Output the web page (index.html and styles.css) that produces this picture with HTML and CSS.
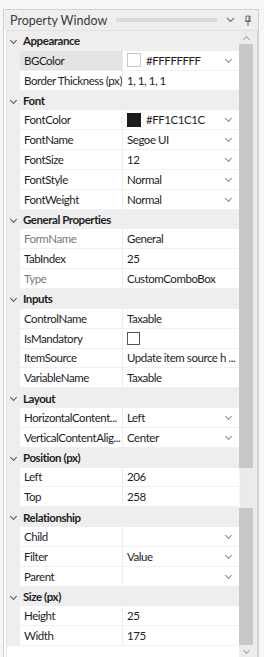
FILE: index.html
```html
<!DOCTYPE html>
<html lang="en">
<head>
  <meta charset="UTF-8">
  <title>Property Window</title>
  <link rel="stylesheet" href="styles.css">
</head>
<body>

  <div class="window">
    <div class="titlebar">
      <span class="title">Property Window</span>
      <span class="grip"></span>
      <svg class="tb-icon" width="9" height="6" viewBox="0 0 9 6"><path d="M1 1l3.5 3.5L8 1" fill="none" stroke="#777" stroke-width="1.2"/></svg>
      <svg class="tb-icon pin" width="8" height="11" viewBox="0 0 8 11"><path d="M2 1h4v5H2zM1 6.5h6M4 7v4M5 1v5" fill="none" stroke="#666" stroke-width="1"/></svg>
    </div>

    <div class="body">
      <div class="grid">

        <div class="cat"><span class="caret"></span>Appearance</div>
        <div class="row">
          <div class="name selected">BGColor</div>
          <div class="value"><span class="swatch white"></span>#FFFFFFFF<span class="drop"></span></div>
        </div>
        <div class="row">
          <div class="name">Border Thickness (px)</div>
          <div class="value">1, 1, 1, 1</div>
        </div>

        <div class="cat"><span class="caret"></span>Font</div>
        <div class="row">
          <div class="name">FontColor</div>
          <div class="value"><span class="swatch dark"></span>#FF1C1C1C<span class="drop"></span></div>
        </div>
        <div class="row">
          <div class="name">FontName</div>
          <div class="value">Segoe UI<span class="drop"></span></div>
        </div>
        <div class="row">
          <div class="name">FontSize</div>
          <div class="value">12<span class="drop"></span></div>
        </div>
        <div class="row">
          <div class="name">FontStyle</div>
          <div class="value">Normal<span class="drop"></span></div>
        </div>
        <div class="row">
          <div class="name">FontWeight</div>
          <div class="value">Normal<span class="drop"></span></div>
        </div>

        <div class="cat"><span class="caret"></span>General Properties</div>
        <div class="row">
          <div class="name readonly">FormName</div>
          <div class="value">General</div>
        </div>
        <div class="row">
          <div class="name">TabIndex</div>
          <div class="value">25</div>
        </div>
        <div class="row">
          <div class="name readonly">Type</div>
          <div class="value">CustomComboBox</div>
        </div>

        <div class="cat"><span class="caret"></span>Inputs</div>
        <div class="row">
          <div class="name">ControlName</div>
          <div class="value">Taxable</div>
        </div>
        <div class="row">
          <div class="name">IsMandatory</div>
          <div class="value"><span class="check"></span></div>
        </div>
        <div class="row">
          <div class="name">ItemSource</div>
          <div class="value">Update item source h ...</div>
        </div>
        <div class="row">
          <div class="name">VariableName</div>
          <div class="value">Taxable</div>
        </div>

        <div class="cat"><span class="caret"></span>Layout</div>
        <div class="row">
          <div class="name">HorizontalContent...</div>
          <div class="value">Left<span class="drop"></span></div>
        </div>
        <div class="row">
          <div class="name">VerticalContentAlig...</div>
          <div class="value">Center<span class="drop"></span></div>
        </div>

        <div class="cat"><span class="caret"></span>Position (px)</div>
        <div class="row">
          <div class="name">Left</div>
          <div class="value">206</div>
        </div>
        <div class="row">
          <div class="name">Top</div>
          <div class="value">258</div>
        </div>

        <div class="cat"><span class="caret"></span>Relationship</div>
        <div class="row">
          <div class="name">Child</div>
          <div class="value"><span class="drop"></span></div>
        </div>
        <div class="row">
          <div class="name">Filter</div>
          <div class="value">Value<span class="drop"></span></div>
        </div>
        <div class="row">
          <div class="name">Parent</div>
          <div class="value"><span class="drop"></span></div>
        </div>

        <div class="cat"><span class="caret"></span>Size (px)</div>
        <div class="row">
          <div class="name">Height</div>
          <div class="value">25</div>
        </div>
        <div class="row">
          <div class="name">Width</div>
          <div class="value">175</div>
        </div>

      </div>

      <div class="scrollbar">
        <div class="arrow up"></div>
        <div class="thumb"></div>
        <div class="thumb-gap"></div>
        <div class="thumb rest"></div>
        <div class="arrow down"></div>
      </div>
    </div>
  </div>

</body>
</html>
```

FILE: styles.css
```css
body {
  margin: 0;
  padding: 9px 5px 0 3px;
  background: #f6f6f6;
  font-family: "Lato", "Noto Sans", sans-serif;
  font-size: 11.5px;
  letter-spacing: -0.45px;
  color: #1e1e1e;
}
.window {
  border: 1px solid #d2d2d2;
  border-bottom: none;
  background: #fff;
  height: 648px;
  display: flex;
  flex-direction: column;
}
.titlebar {
  height: 20px;
  background: #eeeeee;
  display: flex;
  align-items: center;
  padding: 0 6px 0 6px;
  gap: 5px;
  color: #3c3c3c;
  font-size: 12.5px;
  letter-spacing: 0;
}
.grip {
  flex: 1;
  height: 4px;
  margin: 0 4px;
  background-image: radial-gradient(#c4c4c4 0.6px, transparent 0.8px);
  background-size: 2px 2px;
}
.tb-icon {
  display: block;
}
.pin {
  margin-left: 4px;
}
.body {
  flex: 1;
  display: flex;
  border-top: 1px solid #e2e2e2;
  margin-left: 2px;
  border-left: 1px solid #e2e2e2;
}
.grid {
  width: 234px;
  background: #fff;
}
.cat {
  height: 19.85px;
  background: #eeeeee;
  display: flex;
  align-items: center;
  font-weight: bold;
  padding-left: 16px;
  position: relative;
}
.caret {
  position: absolute;
  left: 4px;
  top: 7px;
  width: 4px;
  height: 4px;
  border-right: 1px solid #555;
  border-bottom: 1px solid #555;
  transform: rotate(45deg);
}
.row {
  height: 19.85px;
  display: flex;
  background: #eeeeee;
  padding-left: 13px;
}
.name,
.value {
  display: flex;
  align-items: center;
  background: #fff;
  border-bottom: 1px solid #f0f0f0;
  white-space: nowrap;
  overflow: hidden;
}
.name {
  width: 98px;
  padding-left: 4px;
  border-right: 1px solid #ececec;
}
.name.selected {
  background: #e4e4e4;
}
.name.readonly {
  color: #7a7a7a;
}
.value {
  flex: 1;
  padding-left: 4px;
  position: relative;
}
.swatch {
  width: 12px;
  height: 12px;
  border: 1px solid #c8c8c8;
  margin-right: 5px;
}
.swatch.white {
  background: #fff;
}
.swatch.dark {
  background: #1c1c1c;
  border-color: #1c1c1c;
}
.check {
  width: 11px;
  height: 11px;
  border: 1px solid #555;
}
.drop {
  position: absolute;
  right: 8px;
  top: 6px;
  width: 4px;
  height: 4px;
  border-right: 1px solid #8a8a8a;
  border-bottom: 1px solid #8a8a8a;
  transform: rotate(45deg);
}
.scrollbar {
  width: 18px;
  background: #ececec;
  border-right: 1px solid #d6d6d6;
  display: flex;
  flex-direction: column;
}
.arrow {
  height: 13px;
  position: relative;
}
.arrow::after {
  content: "";
  position: absolute;
  left: 5px;
  width: 4px;
  height: 4px;
  border-left: 1px solid #a8a8a8;
  border-top: 1px solid #a8a8a8;
}
.arrow.up::after {
  top: 6px;
  transform: rotate(45deg);
}
.arrow.down::after {
  top: 3px;
  transform: rotate(225deg);
}
.thumb {
  width: 14px;
  height: 424px;
  background: #c8c8c8;
}
.thumb-gap {
  width: 14px;
  height: 40px;
  background: #ebebeb;
  border-left: 1px solid #f7f7f7;
  box-sizing: border-box;
}
.thumb.rest {
  height: 137px;
}
```
